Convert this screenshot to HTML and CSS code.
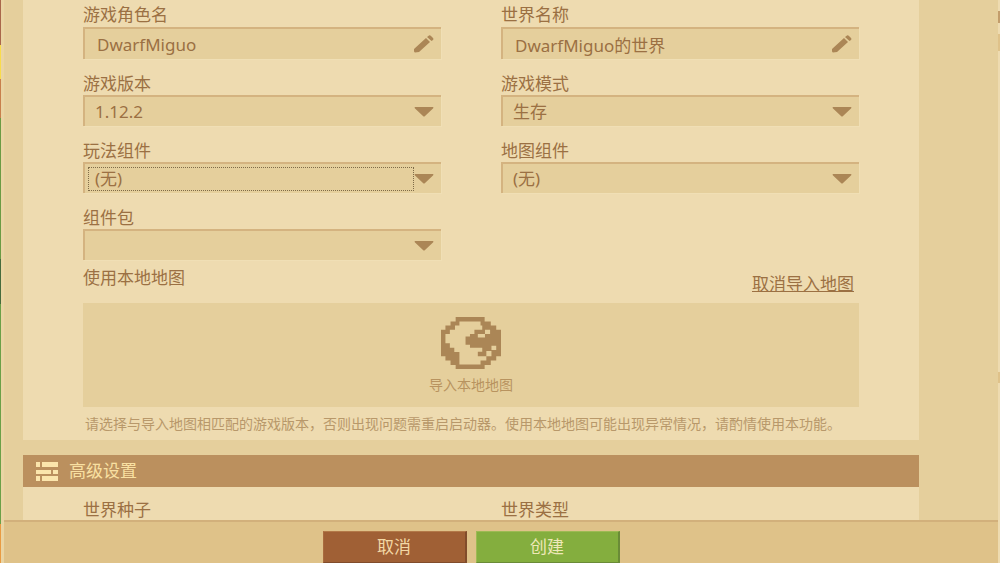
FILE: index.html
```html
<!DOCTYPE html>
<html lang="zh-CN">
<head>
<meta charset="utf-8">
<title>创建世界</title>
<link rel="stylesheet" href="styles.css">
</head>
<body>
<svg class="sprites" aria-hidden="true">
  <symbol id="pencil" viewBox="0 0 20 18" preserveAspectRatio="none">
    <path d="M0 14 12 3 16 7 5 17 1 17.500Q0 17 0 16ZM13 2 15 .5Q16 0 17 1L19 3Q20 4 19 5L17.500 6Z"/>
  </symbol>
  <symbol id="arrow" viewBox="0 0 20 10" preserveAspectRatio="none">
    <path d="M1 0H19Q20 .5 19 1.500L11 9Q10 10 9 9L1 1.500Q0 .5 1 0Z"/>
  </symbol>
</svg>
<div class="frame">
  <div class="edge-left"></div>
  <div class="window">
    <main class="scroll">
      <section class="panel">
        <div class="form">
          <div class="field">
            <label for="role">游戏角色名</label>
            <div class="control"><input class="text" id="role" type="text" value="DwarfMiguo"><svg class="pencil"><use href="#pencil"/></svg></div>
          </div>
          <div class="field">
            <label for="world">世界名称</label>
            <div class="control"><input class="text" id="world" type="text" value="DwarfMiguo的世界"><svg class="pencil"><use href="#pencil"/></svg></div>
          </div>
          <div class="field">
            <label for="version">游戏版本</label>
            <div class="control"><select id="version"><option>1.12.2</option></select><svg class="arrow"><use href="#arrow"/></svg></div>
          </div>
          <div class="field">
            <label for="mode">游戏模式</label>
            <div class="control"><select id="mode"><option>生存</option></select><svg class="arrow"><use href="#arrow"/></svg></div>
          </div>
          <div class="field">
            <label for="play">玩法组件</label>
            <div class="control focused"><select id="play"><option>(无)</option></select><svg class="arrow"><use href="#arrow"/></svg></div>
          </div>
          <div class="field">
            <label for="map">地图组件</label>
            <div class="control"><select id="map"><option>(无)</option></select><svg class="arrow"><use href="#arrow"/></svg></div>
          </div>
          <div class="field">
            <label for="pack">组件包</label>
            <div class="control"><select id="pack"><option></option></select><svg class="arrow"><use href="#arrow"/></svg></div>
          </div>
        </div>
        <div class="local">
          <span>使用本地地图</span>
          <a class="cancel-import" href="#">取消导入地图</a>
        </div>
        <button class="import" type="button">
          <svg class="globe" viewBox="12 12 176 154" preserveAspectRatio="none">
            <path fill-rule="evenodd" d="M55 12H140V25H158V37H174V50H188V128H174V141H158V154H140V166H55V154H40V141H25V128H12V50H25V37H40V25H55ZM66 25V37H53V50H38V62H25V90H38V103H51V116H66V153H128V141H145V128H120V115H133V103H97V94H84V70H97V62H110V50H133V37H128V25ZM141 50V62H156V50ZM120 62V73H141V62ZM160 97V110H174V97ZM145 113V128H160V113Z"/>
          </svg>
          <span>导入本地地图</span>
        </button>
        <p class="note">请选择与导入地图相匹配的游戏版本，否则出现问题需重启启动器。使用本地地图可能出现异常情况，请酌情使用本功能。</p>
      </section>
      <section class="panel-advanced">
        <h2>
          <svg class="bricks" viewBox="0 0 22 19"><path d="M0 0H4V5H0ZM6 0H22V5H6ZM0 8H15V12H0ZM17 8H22V12H17ZM0 14H4V19H0ZM6 14H22V19H6Z"/></svg>
          <span>高级设置</span>
        </h2>
        <div class="advanced">
          <span>世界种子</span>
          <span>世界类型</span>
        </div>
      </section>
    </main>
    <footer class="actions">
      <button class="cancel" type="button">取消</button>
      <button class="create" type="button">创建</button>
    </footer>
  </div>
  <div class="edge-right"></div>
</div>
</body>
</html>
```

FILE: styles.css
```css
* { box-sizing: border-box; }

body {
  margin: 0;
  color: #9b7043;
  font: 17px/20px "Noto Sans", "Noto Sans CJK SC", sans-serif;
}

.sprites { display: none; }

.frame {
  display: grid;
  grid-template-columns: 1px minmax(0, 1fr) 2px;
  height: 100vh;
  overflow: hidden;
}

.edge-left {
  background: linear-gradient(#a9674b 0 8%, #f9dc4c 8% 14%, #c8804c 14% 21%, #6b9b43 21% 46%, #466b3c 46% 54%, #6ba047 54% 93%, #e99b42 93%);
}

.edge-right {
  background: linear-gradient(#eedbb0 0 2%, #c39d6b 2% 4%, #eedbb0 4% 6%, #dfc28a 6% 9%, #eedbb0 9% 66%, #dfc28a 66% 68%, #eedbb0 68%);
}

.window {
  display: flex;
  flex-direction: column;
  min-height: 0;
  border-left: 3px solid #ead5a4;
  background: #e5cf9c;
}

.scroll {
  flex: 1;
  min-height: 0;
  overflow: hidden;
  padding: 0 79px 0 19px;
}

.panel {
  padding: 5px 60px 6px;
  background: #eedbb0;
}

.form {
  display: grid;
  grid-template-columns: 1fr 1fr;
  gap: 15px 60px;
}

.field {
  display: grid;
  grid-template-rows: 21px 31px;
}

.field:nth-child(-n+2) { grid-template-rows: 22px 32px; }

.control {
  display: grid;
  grid-template-columns: minmax(0, 1fr) 20px;
  align-items: center;
  padding-right: 7px;
  border: solid #d4b380;
  border-width: 2px 0 0 2px;
  background: #e5cf9c;
  box-shadow: 1px 1px #f0dfb5;
}

input,
select {
  width: 100%;
  min-width: 0;
  height: 24px;
  padding: 0 0 0 10px;
  border: 0;
  border-radius: 0;
  background: none;
  color: inherit;
  font: inherit;
  appearance: none;
  outline: none;
}

input { padding-left: 12px; }

.focused { padding-left: 3px; }

.focused select {
  padding-left: 6px;
  border: 1px dotted #7f6b48;
}

.control svg,
.globe { fill: #ab8656; }

.pencil { width: 20px; height: 18px; }

.arrow { width: 20px; height: 10px; }

.local {
  display: flex;
  justify-content: space-between;
  align-items: flex-start;
  height: 35px;
  margin-top: 8px;
}

.cancel-import {
  margin: 6px 5px 0 0;
  color: inherit;
}

.import {
  display: flex;
  flex-direction: column;
  align-items: center;
  gap: 6px;
  width: 100%;
  height: 104px;
  padding: 14px 0 0;
  border: 0;
  background: #e5cf9c;
  color: #b8935f;
  font: inherit;
  font-size: 14px;
}

.globe { width: 60px; height: 52px; }

.note {
  margin: 7px 0 0;
  padding-left: 2px;
  color: #b8986a;
  font-size: 14px;
  white-space: nowrap;
}

.panel-advanced {
  margin-top: 15px;
  background: #eedbb0;
}

.panel-advanced h2 {
  display: flex;
  align-items: center;
  gap: 11px;
  height: 32px;
  margin: 0;
  padding-left: 13px;
  background: #bb905e;
  color: #f9e0a2;
  font: inherit;
}

.bricks { width: 22px; height: 19px; fill: #fbe5ac; }

.advanced {
  display: grid;
  grid-template-columns: 1fr 1fr;
  gap: 60px;
  padding: 13px 60px 0;
}

.actions {
  display: flex;
  justify-content: center;
  gap: 9px;
  height: 43px;
  padding: 9px 60px 0 0;
  border-top: 2px solid #d2b07b;
  background: #dfc289;
}

.actions button {
  width: 144px;
  border-style: solid;
  border-width: 1px 2px 1px 1px;
  font: inherit;
}

.cancel {
  border-color: #b37948 #814c2b #814c2b #a96b3e;
  background: #a06035;
  color: #f3d8a5;
}

.create {
  border-color: #9dba53 #6a8b37 #6a8b37 #9dba53;
  background: #84ae3e;
  color: #eee8b8;
}
```
